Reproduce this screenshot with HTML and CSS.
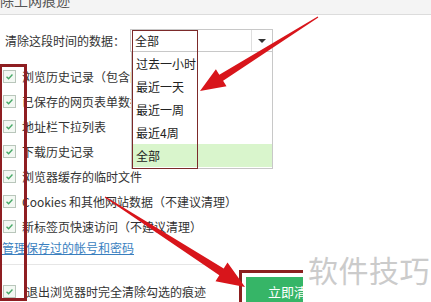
FILE: index.html
```html
<!DOCTYPE html>
<html lang="zh-CN">
<head>
  <meta charset="UTF-8" />
  <title>清除上网痕迹</title>
  <link rel="stylesheet" href="styles.css">
</head>
<body>
  <div class="titlebar"><span>除上网痕迹</span></div>

  <div class="range">
    <span class="range-label">清除这段时间的数据：</span>
    <div class="select">
      <span class="select-value">全部</span>
      <span class="select-btn"><i class="caret"></i></span>
    </div>
  </div>

  <div class="checks">
    <label class="row"><span class="cb"><svg viewBox="0 0 13 13"><path d="M3 6.8l2.4 2.3 4.6-5"/></svg></span>浏览历史记录（包含网址和页面访问记录）</label>
    <label class="row"><span class="cb"><svg viewBox="0 0 13 13"><path d="M3 6.8l2.4 2.3 4.6-5"/></svg></span>已保存的网页表单数据</label>
    <label class="row"><span class="cb"><svg viewBox="0 0 13 13"><path d="M3 6.8l2.4 2.3 4.6-5"/></svg></span>地址栏下拉列表</label>
    <label class="row"><span class="cb"><svg viewBox="0 0 13 13"><path d="M3 6.8l2.4 2.3 4.6-5"/></svg></span>下载历史记录</label>
    <label class="row"><span class="cb"><svg viewBox="0 0 13 13"><path d="M3 6.8l2.4 2.3 4.6-5"/></svg></span>浏览器缓存的临时文件</label>
    <label class="row"><span class="cb"><svg viewBox="0 0 13 13"><path d="M3 6.8l2.4 2.3 4.6-5"/></svg></span>Cookies 和其他网站数据（不建议清理）</label>
    <label class="row"><span class="cb"><svg viewBox="0 0 13 13"><path d="M3 6.8l2.4 2.3 4.6-5"/></svg></span>新标签页快速访问（不建议清理）</label>
    <a class="manage" href="#">管理保存过的帐号和密码</a>
    <div class="sep"></div>
    <div class="bottom">
      <label class="row exit"><span class="cb"><svg viewBox="0 0 13 13"><path d="M3 6.8l2.4 2.3 4.6-5"/></svg></span>退出浏览器时完全清除勾选的痕迹</label>
      <button class="clear-btn">立即清理</button>
    </div>
  </div>

  <!-- open dropdown -->
  <ul class="dropdown">
    <li>过去一小时</li>
    <li>最近一天</li>
    <li>最近一周</li>
    <li>最近4周</li>
    <li class="active">全部</li>
  </ul>

  <!-- annotations -->
  <div class="mark mark-list"></div>
  <div class="mark mark-drop"></div>
  <svg class="arrows" width="431" height="302" viewBox="0 0 431 302">
    <polygon points="317.7,16.6 219.3,74.7 215.9,69.2 200,91 226.5,86.2 223.1,80.7 318.3,17.4"/>
    <polygon points="105.3,196.6 223.7,268.5 227.5,262.6 245,287 215.5,281.2 219.3,275.3 104.7,197.4"/>
  </svg>
  <div class="watermark">软件技巧</div>
</body>
</html>
```

FILE: styles.css
```css
* { margin: 0; padding: 0; box-sizing: border-box; }

html, body {
  width: 431px;
  height: 302px;
  overflow: hidden;
  background: #fff;
  color: #333;
  font-family: "Noto Sans CJK SC", "Liberation Sans", sans-serif;
}

body { position: relative; }

.titlebar {
  height: 15px;
  background: #f4f4f4;
  border-bottom: 1px solid #dcdcdc;
  overflow: hidden;
}

.titlebar span {
  display: block;
  margin-top: -8px;
  font-size: 14px;
  line-height: 16px;
  color: #555;
}

.range {
  display: flex;
  align-items: center;
  padding: 14px 0 0 5px;
}

.range-label {
  width: 125px;
  font-size: 12px;
  line-height: 23px;
}

.select {
  width: 143px;
  height: 23px;
  border: 1px solid #c8c8c8;
  display: flex;
}

.select-value {
  flex: 1;
  padding-left: 4px;
  font-size: 12px;
  line-height: 21px;
  color: #222;
}

.select-btn {
  width: 21px;
  border-left: 1px solid #dedede;
  display: flex;
  align-items: center;
  justify-content: center;
}

.caret {
  width: 0;
  height: 0;
  border-left: 4px solid transparent;
  border-right: 4px solid transparent;
  border-top: 4px solid #333;
}

.checks {
  margin-top: 12px;
  display: flex;
  flex-direction: column;
}

.row {
  height: 25px;
  display: flex;
  align-items: center;
  gap: 6px;
  padding-left: 3px;
  font-size: 12px;
  white-space: nowrap;
}

.cb {
  width: 13px;
  height: 13px;
  flex: none;
  border: 1px solid #b9c6bb;
  background: #f3f8f3;
  display: flex;
}

.cb svg {
  width: 11px;
  height: 11px;
  fill: none;
  stroke: #45a866;
  stroke-width: 1.6;
}

.manage {
  height: 18px;
  padding-left: 2px;
  font-size: 12px;
  line-height: 18px;
  color: #3a7fbf;
  text-decoration: underline;
}

.sep {
  width: 215px;
  height: 1px;
  margin-top: 7px;
  background: #e6e6e6;
}

.bottom {
  width: 303px;
  margin-top: 2px;
  display: flex;
  align-items: center;
  overflow: hidden;
  padding: 10px 0;
}

.exit { padding-left: 3px; gap: 10px; }

.clear-btn {
  margin-left: auto;
  flex: none;
  width: 90px;
  height: 28px;
  margin-right: -33px;
  border: none;
  background: #36b567;
  color: #fff;
  font-family: inherit;
  font-size: 13px;
  text-align: left;
  padding-left: 22px;
  outline: 3px solid #8c1f1f;
  outline-offset: 4px;
}

.dropdown {
  position: absolute;
  left: 131px;
  top: 52px;
  width: 142px;
  height: 117px;
  list-style: none;
  background: #fff;
  border: 1px solid #c8c8c8;
  border-top: none;
}

.dropdown li {
  height: 23px;
  padding-left: 4px;
  font-size: 12px;
  line-height: 23px;
  color: #222;
}

.dropdown li.active { background: #d9f5cc; }

.mark {
  position: absolute;
  border: 3px solid #8e1e22;
}

.mark-list {
  left: 0;
  top: 64px;
  width: 27px;
  height: 237px;
  border-left-width: 2px;
}

.mark-drop {
  left: 132px;
  top: 30px;
  width: 66px;
  height: 139px;
  border: 1px solid #7c2a2a;
}

.arrows {
  position: absolute;
  left: 0;
  top: 0;
  pointer-events: none;
}

.arrows polygon { fill: #d8151b; }

.watermark {
  position: absolute;
  left: 308px;
  top: 251px;
  font-size: 30px;
  line-height: 36px;
  color: #cbcbcb;
  letter-spacing: 0.5px;
}
```
